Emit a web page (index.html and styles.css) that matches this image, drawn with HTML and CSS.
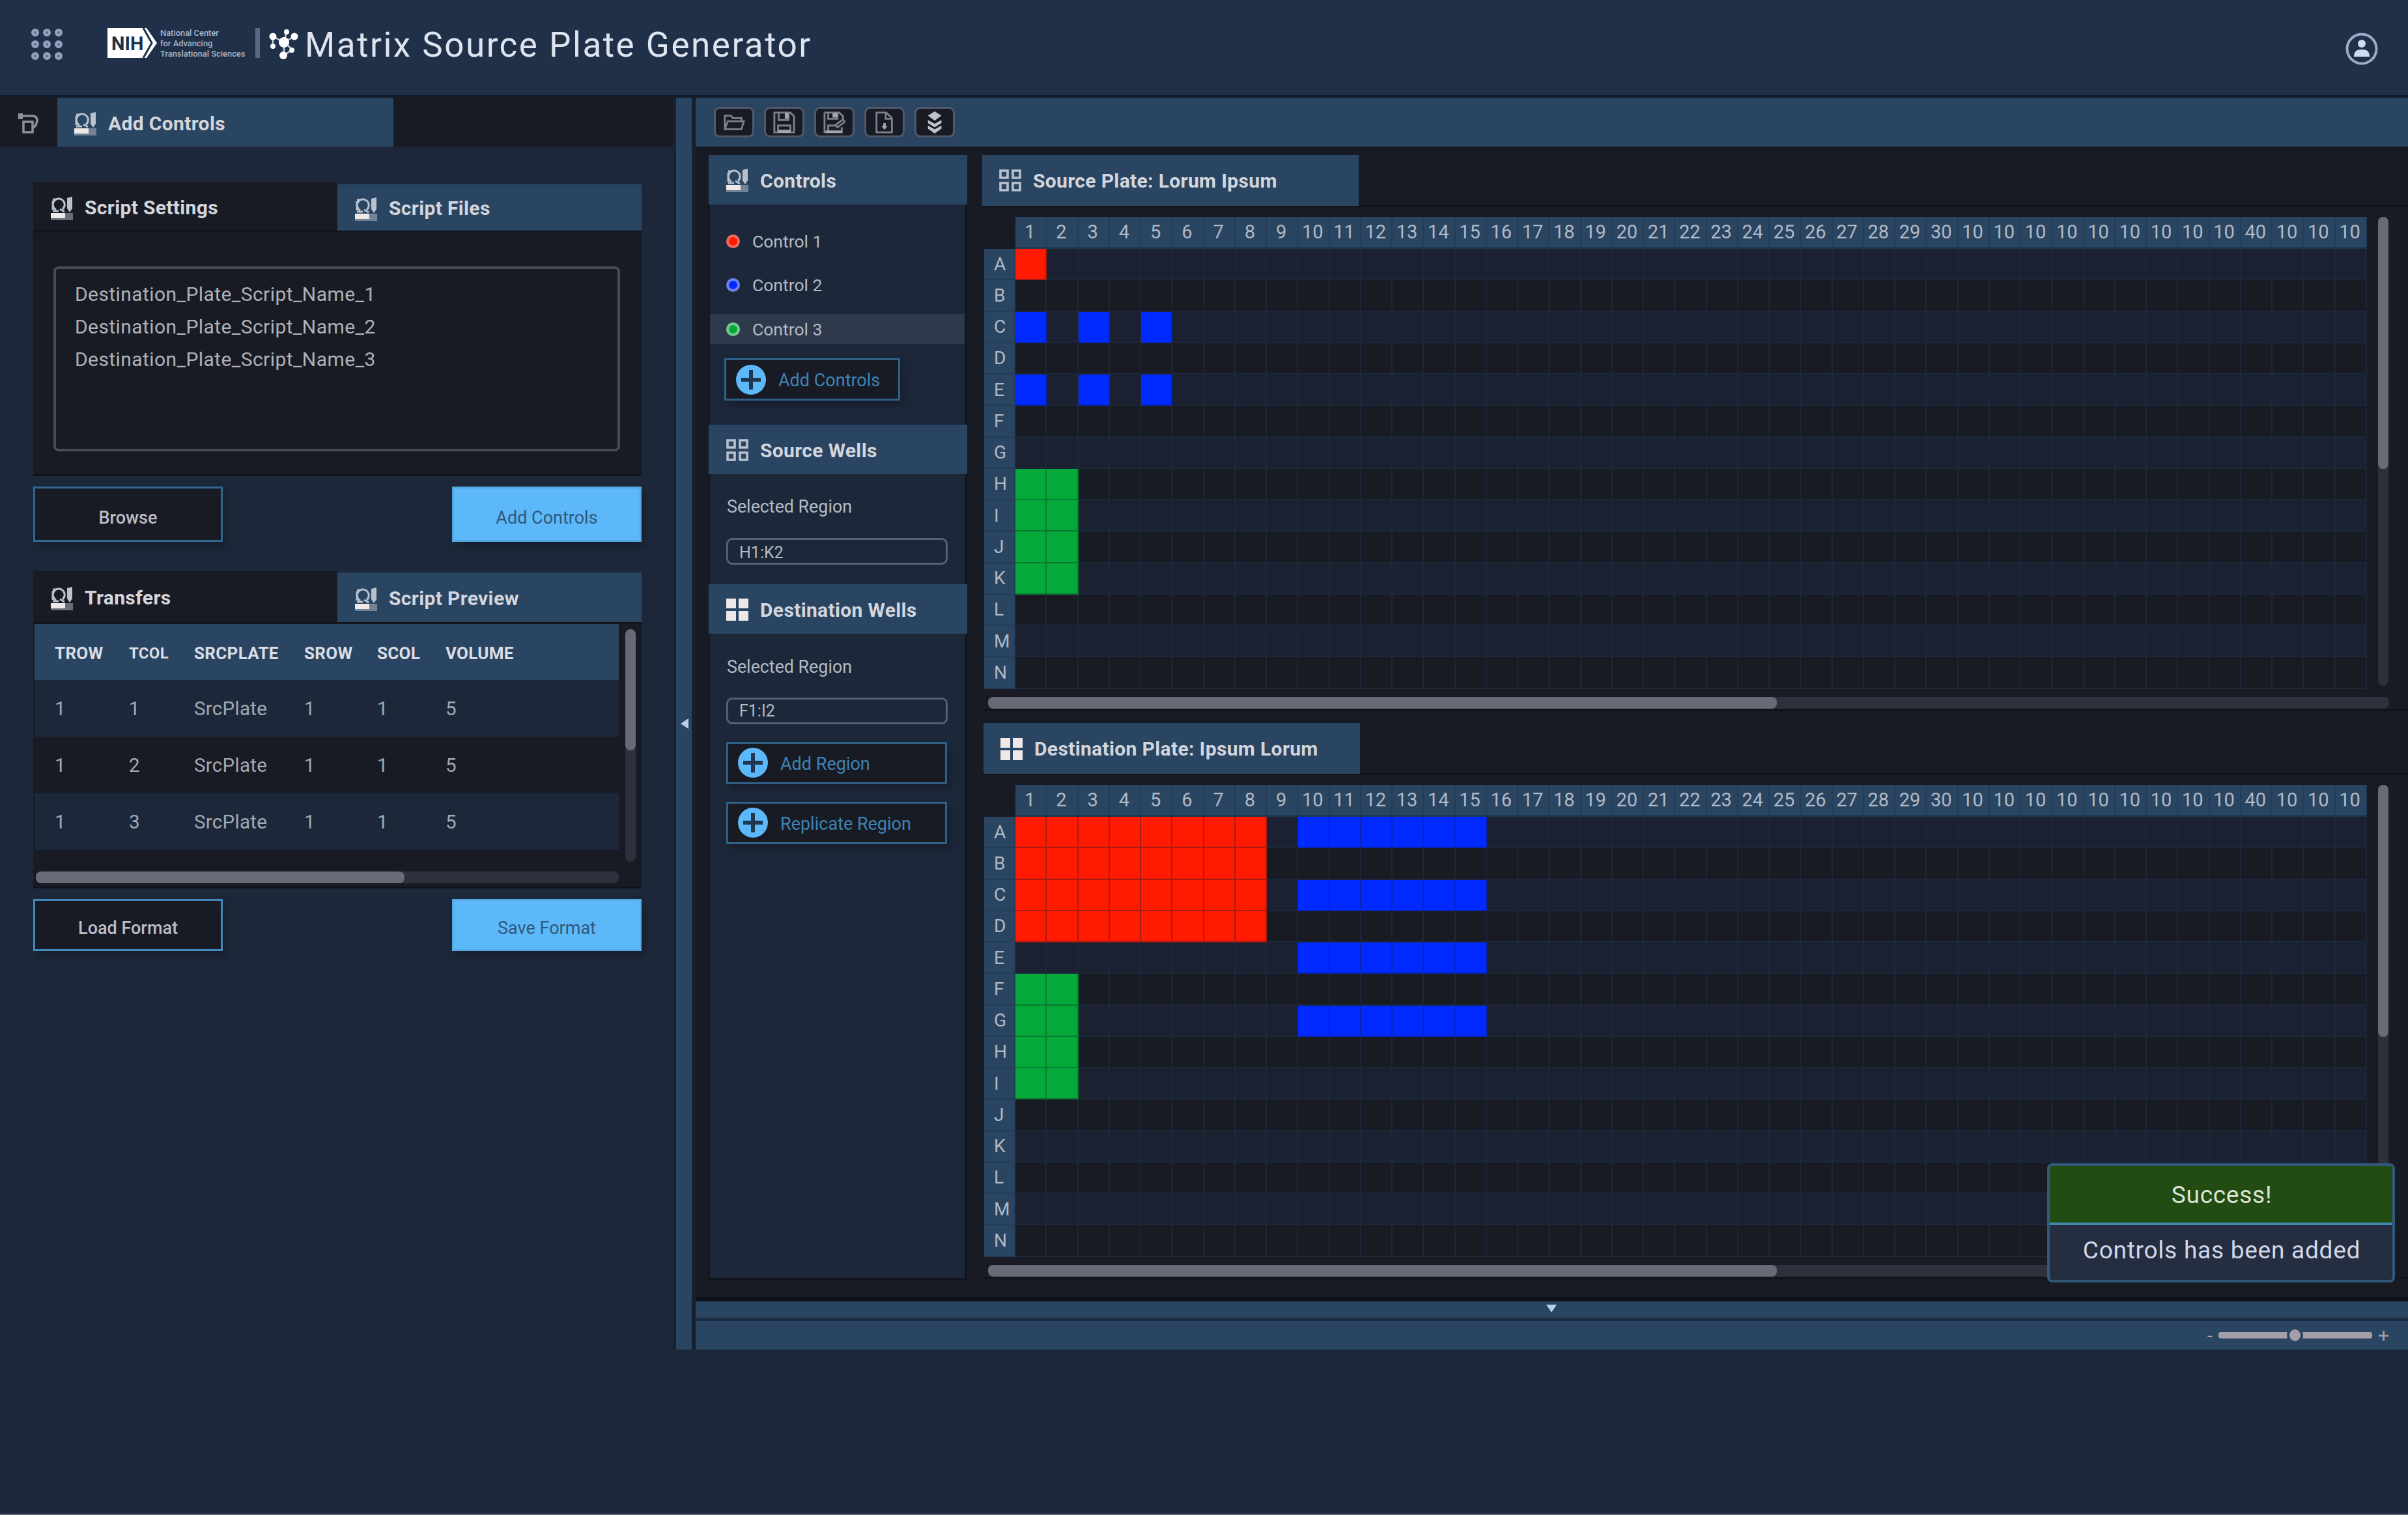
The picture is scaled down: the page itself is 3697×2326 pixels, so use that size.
FILE: index.html
```html
<!DOCTYPE html>
<html lang="en">
<head>
    <meta charset="UTF-8">
    <meta name="viewport" content="width=device-width, initial-scale=1.0">
    <title>Matrix Source Plate Generator</title>
    <link rel="stylesheet" href="styles.css">
</head>
<body>
    <!-- icons shared by the tabs and buttons -->
    <svg class="sprite" xmlns="http://www.w3.org/2000/svg">
        <symbol id="i-control" viewBox="0 0 34 36">
            <path d="M3 20V6M8 20A9 9 0 1 1 18 19M3 4h5M3 22h9M14 19l7 4" fill="none" stroke="currentColor" stroke-width="3"/>
            <path d="M25 2l8-2v18l-4 6-4-6z" fill="currentColor"/>
            <path d="M0 25h22v8H0z" fill="#efe8e8"/>
            <path d="M0 33h34v3H0zM22 25h12v8H22z" fill="currentColor" opacity=".5"/>
        </symbol>
        <symbol id="i-wells" viewBox="0 0 34 34">
            <path d="M2 2h11v11H2zM21 2h11v11H21zM2 21h11v11H2zM21 21h11v11H21z" fill="none" stroke="currentColor" stroke-width="3.6"/>
        </symbol>
        <symbol id="i-wells-full" viewBox="0 0 34 34">
            <path d="M0 0h15v15H0zM19 0h15v15H19zM0 19h15v15H0zM19 19h15v15H19z" fill="#efe8e8"/>
        </symbol>
        <symbol id="i-plus" viewBox="0 0 46 46">
            <circle cx="23" cy="23" r="23" fill="#5db8fa"/>
            <path d="M23 8v30M8 23h30" stroke="#1f3850" stroke-width="6"/>
        </symbol>
    </svg>

    <header class="header">
        <svg class="apps" viewBox="0 0 48 48">
            <g fill="#5f7190" stroke="#93a3bd" stroke-width="4">
                <circle cx="6" cy="6" r="4"/><circle cx="24" cy="6" r="4"/><circle cx="42" cy="6" r="4"/>
                <circle cx="6" cy="24" r="4"/><circle cx="24" cy="24" r="4"/><circle cx="42" cy="24" r="4"/>
                <circle cx="6" cy="42" r="4"/><circle cx="24" cy="42" r="4"/><circle cx="42" cy="42" r="4"/>
            </g>
        </svg>
        <div class="nih">
            <svg class="nih-shape" viewBox="0 0 76 46">
                <path d="M0 0h60l16 23-16 23H0z" fill="#fff"/>
                <path d="M55 0l13 23-13 23" fill="none" stroke="#203049" stroke-width="3"/>
            </svg>
            <span class="nih-name">NIH</span>
        </div>
        <div class="center-name">National Center<br>for Advancing<br>Translational Sciences</div>
        <div class="divider"></div>
        <svg class="molecule" viewBox="0 0 46 46">
            <path d="M6 11l17 9M39 11L23 20M27 4l-4 16M6 11v14M23 20v20M36 31L23 20M23 40l13-9" stroke="#c4cddb" stroke-width="2.5"/>
            <g fill="#fff">
                <circle cx="23" cy="20" r="8"/><circle cx="6" cy="11" r="5.5"/><circle cx="39" cy="11" r="5.5"/>
                <circle cx="27" cy="4" r="4"/><circle cx="6" cy="26" r="4"/><circle cx="35" cy="32" r="4"/><circle cx="22" cy="40" r="6"/>
            </g>
        </svg>
        <h1 class="title">Matrix Source Plate Generator</h1>
        <svg class="user" viewBox="0 0 50 50">
            <circle cx="25" cy="25" r="22.5" fill="none" stroke="#9aabc6" stroke-width="4"/>
            <circle cx="25" cy="17" r="6" fill="#cfdcf0"/>
            <path d="M13 37c0-8 4-11 12-11s12 3 12 11z" fill="#cfdcf0"/>
        </svg>
    </header>

    <main class="main">
        <section class="sidebar">
            <div class="tabs side-tabs">
                <div class="history">
                    <svg viewBox="0 0 32 32"><path d="M2 4h21q6 1 6 7-1 8-6 11M8 13h14v16H8z" fill="none" stroke="#8d919b" stroke-width="3.5"/><path d="M0 0h7v9H0z" fill="#8d919b"/></svg>
                </div>
                <div class="tab side-tab"><svg class="icon"><use href="#i-control"/></svg>Add Controls</div>
            </div>

            <div class="widget scripts">
                <div class="tabs">
                    <div class="tab dark"><svg class="icon"><use href="#i-control"/></svg>Script Settings</div>
                    <div class="tab light"><svg class="icon"><use href="#i-control"/></svg>Script Files</div>
                </div>
                <div class="script-box">
                    <div class="script-list">
                        <div>Destination_Plate_Script_Name_1</div>
                        <div>Destination_Plate_Script_Name_2</div>
                        <div>Destination_Plate_Script_Name_3</div>
                    </div>
                </div>
                <div class="actions">
                    <button class="btn">Browse</button>
                    <button class="btn primary">Add Controls</button>
                </div>
            </div>

            <div class="widget transfers">
                <div class="tabs">
                    <div class="tab dark"><svg class="icon"><use href="#i-control"/></svg>Transfers</div>
                    <div class="tab light"><svg class="icon"><use href="#i-control"/></svg>Script Preview</div>
                </div>
                <div class="table-box">
                    <div class="table-view">
                        <div class="tr th"><span>TROW</span><span class="small">TCOL</span><span>SRCPLATE</span><span>SROW</span><span>SCOL</span><span>VOLUME</span></div>
                        <div class="tr"><span>1</span><span>1</span><span>SrcPlate</span><span>1</span><span>1</span><span>5</span></div>
                        <div class="tr"><span>1</span><span>2</span><span>SrcPlate</span><span>1</span><span>1</span><span>5</span></div>
                        <div class="tr"><span>1</span><span>3</span><span>SrcPlate</span><span>1</span><span>1</span><span>5</span></div>
                    </div>
                    <div class="vscroll"><div class="thumb"></div></div>
                    <div class="hscroll"><div class="thumb"></div></div>
                </div>
                <div class="actions">
                    <button class="btn">Load Format</button>
                    <button class="btn primary">Save Format</button>
                </div>
            </div>
        </section>

        <div class="splitter"><div class="arrow-left"></div></div>

        <section class="work">
            <div class="toolbar">
                <button class="tool"><svg viewBox="0 0 36 36"><path d="M3 28V7h10l3 4h14v5M3 29l5-13h26l-4 13z"/></svg></button>
                <button class="tool"><svg viewBox="0 0 36 36"><path d="M2 2h26l6 6v26H2zM9 2v12h16V2M8 34V23h20v11"/><path class="fill" d="M19 3h6v9h-6zM8 30h20v5H8z"/></svg></button>
                <button class="tool"><svg viewBox="0 0 36 36"><path d="M2 2h24l6 6v6M2 2v32h28v-8M8 2v10h15V2M8 34V23h12M20 22l12-9 3 4-12 9z"/><path class="fill" d="M15 3h8v7h-8zM4 31h26v4H4z"/></svg></button>
                <button class="tool"><svg viewBox="0 0 36 36"><path d="M5 2h16l9 9v23H5zM20 2v10h10"/><path class="fill" d="M16 19h4v5h3l-5 6-5-6h3z"/></svg></button>
                <button class="tool"><svg viewBox="0 0 36 36"><path class="bright" d="M18 0l11 7-11 8L7 7zM7 14l11 6 11-6v5l-11 7-11-7zM7 23l11 6 11-6v5l-11 8-11-8z"/></svg></button>
            </div>

            <div class="workspace">
                <aside class="controls">
                    <div class="tab head"><svg class="icon"><use href="#i-control"/></svg>Controls</div>
                    <div class="group group-controls">
                        <div class="control"><i class="dot red"></i>Control 1</div>
                        <div class="control"><i class="dot blue"></i>Control 2</div>
                        <div class="control selected"><i class="dot green"></i>Control 3</div>
                        <button class="add-btn short"><svg><use href="#i-plus"/></svg>Add Controls</button>
                    </div>
                    <div class="tab head"><svg class="icon"><use href="#i-wells"/></svg>Source Wells</div>
                    <div class="group group-source">
                        <div class="label">Selected Region</div>
                        <div class="field">H1:K2</div>
                    </div>
                    <div class="tab head"><svg class="icon"><use href="#i-wells-full"/></svg>Destination Wells</div>
                    <div class="group group-dest">
                        <div class="label">Selected Region</div>
                        <div class="field">F1:I2</div>
                        <button class="add-btn"><svg><use href="#i-plus"/></svg>Add Region</button>
                        <button class="add-btn"><svg><use href="#i-plus"/></svg>Replicate Region</button>
                    </div>
                </aside>

                <div class="plates">
                    <div class="plate">
                        <div class="plate-bar"><div class="tab"><svg class="icon"><use href="#i-wells"/></svg>Source Plate: Lorum Ipsum</div></div>
                        <div class="plate-body">
                            <div class="grid" id="source"></div>
                            <div class="vscroll"><div class="thumb"></div></div>
                            <div class="hscroll"><div class="thumb"></div></div>
                        </div>
                    </div>
                    <div class="plate dest">
                        <div class="plate-bar"><div class="tab"><svg class="icon"><use href="#i-wells-full"/></svg>Destination Plate: Ipsum Lorum</div></div>
                        <div class="plate-body">
                            <div class="grid" id="destination"></div>
                            <div class="vscroll"><div class="thumb"></div></div>
                            <div class="hscroll"><div class="thumb"></div></div>
                        </div>
                    </div>
                </div>
            </div>

            <div class="collapse"><div class="arrow-down"></div></div>
            <div class="status">
                <span class="minus">-</span>
                <div class="zoom"><div class="knob"></div></div>
                <span class="plus">+</span>
            </div>
        </section>
    </main>

    <div class="toast">
        <div class="toast-title">Success!</div>
        <div class="toast-text">Controls has been added</div>
    </div>

    <script>
        var rows = "ABCDEFGHIJKLMN";
        var cols = [];
        for (var i = 1; i <= 30; i++) cols.push(i);
        cols = cols.concat([10, 10, 10, 10, 10, 10, 10, 10, 10, 40, 10, 10, 10]);

        // each region: rows, first column, last column, colour
        var sourceRegions = [
            ["A", 1, 1, "red"],
            ["CE", 1, 1, "blue"], ["CE", 3, 3, "blue"], ["CE", 5, 5, "blue"],
            ["HIJK", 1, 2, "green"]
        ];
        var destRegions = [
            ["ABCD", 1, 8, "red"],
            ["ACEG", 10, 15, "blue"],
            ["FGHI", 1, 2, "green"]
        ];

        function addCell(grid, cls, text) {
            var cell = document.createElement("div");
            cell.className = cls;
            if (text) cell.textContent = text;
            grid.appendChild(cell);
        }

        function drawPlate(id, regions) {
            var grid = document.getElementById(id);
            addCell(grid, "corner");
            cols.forEach(function (c) { addCell(grid, "col", c); });
            for (var r = 0; r < rows.length; r++) {
                addCell(grid, "row", rows[r]);
                for (var c = 1; c <= cols.length; c++) {
                    var cls = r % 2 ? "well" : "well alt";
                    regions.forEach(function (g) {
                        if (g[0].indexOf(rows[r]) >= 0 && c >= g[1] && c <= g[2]) cls = "well " + g[3];
                    });
                    addCell(grid, cls);
                }
            }
        }

        drawPlate("source", sourceRegions);
        drawPlate("destination", destRegions);
    </script>
</body>
</html>
```

FILE: styles.css
```css
* {
    box-sizing: border-box;
    font-family: Roboto, "Liberation Sans", sans-serif;
}

body {
    margin: 0;
    height: 2326px;
    position: relative;
    overflow: hidden;
    background-color: #1c283a;
    border-bottom: 2px solid #5d6676;
    color: #b4bac5;
    font-size: 30px;
}

.sprite {
    display: none;
}

/* header */
.header {
    height: 150px;
    display: flex;
    align-items: flex-start;
    padding: 43px 46px 0 48px;
    background-color: #203049;
    border-bottom: 4px solid #141b29;
}

.apps {
    width: 48px;
    height: 48px;
    margin: 1px 69px 0 0;
}

.nih {
    position: relative;
    width: 76px;
    height: 46px;
}

.nih-shape {
    display: block;
    width: 76px;
    height: 46px;
}

.nih-name {
    position: absolute;
    left: 6px;
    top: 8px;
    line-height: 32px;
    font-size: 29px;
    font-weight: bold;
    color: #203049;
}

.center-name {
    width: 151px;
    padding-left: 5px;
    font-size: 12.9px;
    line-height: 16px;
    font-weight: 500;
    white-space: nowrap;
    color: #a9b3c4;
}

.divider {
    width: 7px;
    height: 46px;
    background-color: #5b6780;
}

.molecule {
    width: 46px;
    height: 46px;
    margin: 2px 9px 0 14px;
}

.title {
    flex: 1;
    margin: -5px 0 0;
    line-height: 62px;
    font-size: 53px;
    font-weight: 400;
    letter-spacing: 2.5px;
    color: #dfe5f0;
}

.user {
    width: 50px;
    height: 50px;
    margin-top: 7px;
}

/* tabs */
.main {
    display: flex;
    height: 1922px;
}

.tabs {
    display: flex;
    align-items: flex-end;
}

.tab {
    display: flex;
    align-items: center;
    font-size: 30px;
    font-weight: bold;
    letter-spacing: .35px;
    white-space: nowrap;
    color: #d3d6dc;
    background-color: #2a4562;
}

.icon {
    width: 34px;
    height: 36px;
    margin-right: 18px;
    color: #b9c1cc;
}

/* left panel */
.sidebar {
    width: 1038px;
    border-right: 5px solid #172131;
}

.side-tabs {
    height: 75px;
    background-color: #191b24;
}

.history {
    width: 88px;
    padding: 24px 0 0 28px;
    height: 75px;
}

.history svg {
    width: 32px;
    height: 32px;
}

.side-tab {
    width: 516px;
    height: 75px;
    padding: 4px 0 0 26px;
}

.widget {
    width: 934px;
    margin-left: 51px;
}

.scripts {
    margin-top: 55px;
}

.widget .tab {
    height: 74px;
    padding: 2px 0 0 27px;
    flex: 1;
}

.widget .icon {
    margin-top: 3px;
}

.widget .tab.dark {
    background-color: #191b24;
}

.scripts .tab.light {
    height: 71px;
}

.script-box {
    height: 377px;
    padding: 52px 33px 0 31px;
    background-color: #191b24;
    border-top: 3px solid #12131b;
    border-bottom: 3px solid #11121a;
}

.script-list {
    height: 284px;
    padding: 14px 29px;
    border: 4px solid #484b54;
    border-radius: 8px;
    line-height: 50px;
    letter-spacing: .42px;
    color: #aeb1b8;
}

.actions {
    display: flex;
    justify-content: space-between;
    margin-top: 16px;
}

.btn {
    width: 291px;
    height: 85px;
    padding: 10px 0 0;
    border: 3px solid #31688f;
    background-color: #191b24;
    color: #b9bcc4;
    font-size: 27px;
    font-weight: 500;
    box-shadow: 6px 8px 8px rgba(22, 24, 36, .5);
}

.btn.primary {
    background-color: #5db8fa;
    border-color: #54a5e0;
    color: #2f587a;
    font-weight: 400;
}

.transfers {
    margin-top: 45px;
}

.transfers .tab {
    height: 76px;
}

.transfers .tab.dark {
    height: 78px;
}

.table-box {
    display: grid;
    grid-template-columns: 899px 1fr;
    grid-template-rows: 371px 1fr;
    height: 409px;
    background-color: #191b24;
    border-top: 3px solid #12131b;
    border-bottom: 3px solid #11121a;
}

.table-view {
    margin-left: 2px;
    overflow: hidden;
}

.tr {
    display: grid;
    grid-template-columns: 114px 100px 169px 112px 105px 1fr;
    align-items: center;
    height: 87px;
    padding: 1px 0 0 31px;
    font-size: 29.5px;
    color: #a3a8b2;
    letter-spacing: .3px;
}

.tr:nth-child(even) {
    background-color: #1c283a;
}

.tr.th {
    height: 86px;
    padding-top: 3px;
    background-color: #2a4562;
    font-size: 26px;
    font-weight: bold;
    color: #dadde3;
}

.tr.th .small {
    font-size: 24px;
}

.vscroll {
    width: 16px;
    border-radius: 8px;
    background-color: #2d313d;
}

.hscroll {
    height: 18px;
    border-radius: 8px;
    background-color: #2d313d;
}

.thumb {
    border-radius: 8px;
    background-color: #686b77;
}

.table-box .vscroll {
    height: 357px;
    margin: 8px 0 0 10px;
}

.table-box .vscroll .thumb {
    height: 186px;
}

.table-box .hscroll {
    margin: 9px 0 0 4px;
}

.table-box .hscroll .thumb {
    width: 566px;
    height: 18px;
}

.transfers .btn {
    height: 80px;
    border-color: #4389bb;
}

.transfers .btn.primary {
    border-color: #57aae6;
}

/* splitter between the two panels */
.splitter {
    width: 30px;
    display: flex;
    align-items: center;
    padding-left: 7px;
    background-color: #2a4562;
    border-right: 6px solid #17202e;
}

.arrow-left {
    border: 8px solid transparent;
    border-left: 0;
    border-right: 12px solid #b9cdea;
}

/* right panel */
.work {
    flex: 1;
    display: flex;
    flex-direction: column;
}

.toolbar {
    display: flex;
    gap: 15px;
    height: 75px;
    padding: 14px 0 0 28px;
    background-color: #2a4562;
}

.tool {
    width: 62px;
    height: 47px;
    padding: 0;
    display: flex;
    align-items: center;
    justify-content: center;
    background-color: #191b24;
    border: 3px solid #50596a;
    border-radius: 9px;
}

.tool svg {
    width: 34px;
    height: 34px;
}

.tool path {
    fill: none;
    stroke: #7d818c;
    stroke-width: 3;
}

.tool .fill {
    fill: #a2a6ae;
    stroke: none;
}

.tool .bright {
    fill: #bfc2c9;
    stroke: none;
}

.workspace {
    display: flex;
    height: 1773px;
    padding: 13px 0 0 20px;
    background-color: #191b24;
    border-bottom: 7px solid #0f1017;
}

.controls {
    display: flex;
    flex-direction: column;
    width: 397px;
    height: 1728px;
    background-color: #1c283a;
    border-bottom: 4px solid #12141c;
}

.head {
    height: 76px;
    padding: 2px 0 0 27px;
}

.group {
    border: 0 solid #14161f;
    border-width: 0 4px 0 2px;
}

.group-controls {
    height: 338px;
    padding-top: 33px;
}

.control {
    display: flex;
    align-items: center;
    height: 46px;
    margin-bottom: 21.5px;
    padding-left: 25px;
    font-size: 26.5px;
}

.control.selected {
    background-color: #2e394c;
}

.dot {
    width: 21px;
    height: 21px;
    margin-right: 19px;
    border: 4px solid;
    border-radius: 50%;
}

.dot.red {
    background-color: #ff1a00;
    border-color: #ee6a60;
}

.dot.blue {
    background-color: #002aff;
    border-color: #6c83ee;
}

.dot.green {
    background-color: #04a93a;
    border-color: #79c795;
}

.add-btn {
    display: flex;
    align-items: center;
    width: 339px;
    height: 65px;
    margin: 27px 0 0 25px;
    padding: 2px 0 0 15px;
    border: 3px solid #2f6188;
    background-color: #191b24;
    color: #3d84b5;
    font-size: 27px;
    box-shadow: 6px 8px 8px rgba(22, 24, 36, .5);
}

.add-btn.short {
    width: 270px;
    margin: 4px 0 0 22px;
    padding-top: 4px;
}

.add-btn svg {
    width: 46px;
    height: 46px;
    margin: -3px 19px 0 0;
}

.group-source {
    height: 169px;
    padding-top: 33px;
}

.label {
    padding-left: 26px;
    line-height: 34px;
    font-size: 26.8px;
    color: #b4bac5;
}

.field {
    width: 340px;
    height: 41px;
    margin: 31px 0 0 25px;
    padding: 3px 0 0 17px;
    line-height: 34px;
    border: 3px solid #585f70;
    border-radius: 9px;
    font-size: 25px;
}

.group-dest {
    flex: 1;
    padding-top: 34px;
}

.group-dest .field {
    margin-top: 30px;
    padding-top: 1px;
}

/* plates */
.plates {
    flex: 1;
    padding-left: 23px;
}

.plate {
    height: 854px;
    margin-bottom: 18px;
    border-bottom: 3px solid #11121a;
}

.plate-bar {
    height: 80px;
    border-bottom: 3px solid #11121a;
}

.plate .tab {
    width: 578px;
    height: 78px;
    padding-left: 26px;
}

.plate.dest .tab {
    margin-left: 2px;
    padding-top: 1px;
}

.plate-body {
    display: grid;
    grid-template-columns: 2129px 1fr;
    align-items: start;
    padding: 15px 0 0 3px;
}

.grid {
    display: grid;
    grid-template-columns: 48px repeat(43, 48.25px);
    grid-template-rows: 49px repeat(14, 48.25px);
}

.col,
.row {
    display: flex;
    align-items: center;
    background-color: #2a4562;
    border-right: 2px solid #243c56;
    font-size: 29px;
    color: #b2b9c4;
}

.col {
    justify-content: center;
    padding: 0 2px 0 0;
    border-bottom: 3px solid #20364e;
}

.row {
    padding-left: 15px;
    font-size: 28px;
    border-bottom: 2px solid #243c56;
}

.well {
    background-color: #191b22;
    border-right: 2px solid #1b273a;
    border-bottom: 2px solid #1b273a;
}

.well.alt {
    background-color: #1b2130;
}

.well.red {
    background-color: #ff1a00;
    border-color: #a51d14;
}

.well.blue {
    background-color: #002aff;
    border-color: #0a25b4;
}

.well.green {
    background-color: #04a93a;
    border-color: #0a7a35;
}

.plate .vscroll {
    height: 720px;
    margin-left: 11px;
}

.plate .vscroll .thumb {
    height: 387px;
}

.plate .hscroll {
    width: 2151px;
    margin: 12px 0 0 6px;
}

.plate .hscroll .thumb {
    width: 1211px;
    height: 18px;
}

/* bottom bars */
.collapse {
    height: 30px;
    padding: 5px 0 0 1306px;
    background-color: #2a4562;
    border-bottom: 5px solid #1d2e42;
}

.arrow-down {
    width: 0;
    border: 8px solid transparent;
    border-bottom: 0;
    border-top: 12px solid #b9cdea;
}

.status {
    flex: 1;
    display: flex;
    align-items: center;
    justify-content: flex-end;
    padding-right: 29px;
    background-color: #2a4562;
    color: #a39ea8;
}

.zoom {
    display: flex;
    align-items: center;
    justify-content: center;
    width: 236px;
    height: 10px;
    margin: 0 9px;
    border-radius: 4px;
    background-color: #a39ea8;
}

.knob {
    width: 25px;
    height: 26px;
    background-color: #a39ea8;
    border: 4px solid #2a4562;
    border-radius: 50%;
}

/* message */
.toast {
    position: absolute;
    left: 3143px;
    top: 1786px;
    width: 534px;
    height: 183px;
    border: 4px solid #31597a;
    border-radius: 8px;
    background-color: #252d40;
    text-align: center;
    font-size: 37px;
    letter-spacing: .75px;
}

.toast-title {
    height: 91px;
    padding: 2px 0 0 2px;
    line-height: 85px;
    background-color: #234c13;
    border-bottom: 4px solid #418ab0;
    border-radius: 4px 4px 0 0;
    color: #dbe3d6;
}

.toast-text {
    padding-left: 2px;
    line-height: 78px;
    color: #d2d8e6;
}
```
